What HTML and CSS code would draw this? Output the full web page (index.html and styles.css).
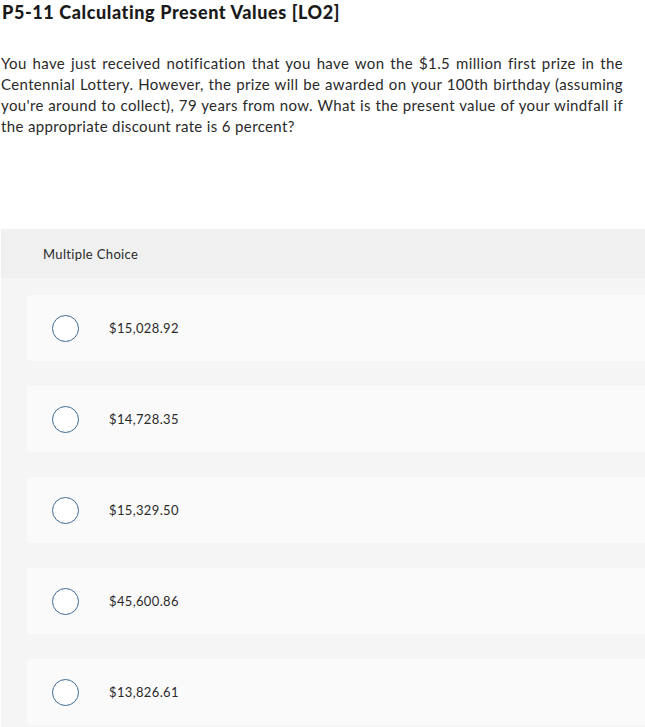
FILE: index.html
```html
<!DOCTYPE html>
<html>
<head>
<meta charset="utf-8">
<link rel="stylesheet" href="styles.css">
</head>
<body>
<div class="page">
  <h1 class="title">P5-11 Calculating Present Values [LO2]</h1>
  <p class="question">You have just received notification that you have won the $1.5 million first prize in the Centennial Lottery. However, the prize will be awarded on your 100th birthday (assuming you're around to collect), 79 years from now. What is the present value of your windfall if the appropriate discount rate is 6 percent?</p>
  <section class="panel">
    <div class="panel-head">Multiple Choice</div>
    <div class="choices">
      <div class="choice"><span class="radio"></span><span class="label">$15,028.92</span></div>
      <div class="choice"><span class="radio"></span><span class="label">$14,728.35</span></div>
      <div class="choice"><span class="radio"></span><span class="label">$15,329.50</span></div>
      <div class="choice"><span class="radio"></span><span class="label">$45,600.86</span></div>
      <div class="choice"><span class="radio"></span><span class="label">$13,826.61</span></div>
    </div>
  </section>
</div>
</body>
</html>
```
FILE: styles.css
```css
html, body {
  margin: 0;
  padding: 0;
  background: #ffffff;
  overflow: hidden;
}
body {
  font-family: Lato, "Open Sans", sans-serif;
  color: #222;
}
.page {
  padding: 0 0 0 1px;
}
.title {
  margin: 0;
  padding: 1px 0 0 1px;
  font-size: 18px;
  font-weight: 900;
  letter-spacing: 0.6px;
  line-height: 22px;
  color: #1a1a1a;
}
.question {
  margin: 30px 0 0 0;
  padding: 0 22px 0 0;
  font-size: 15px;
  letter-spacing: 0.36px;
  line-height: 21px;
  text-align: justify;
  color: #2a2a2a;
}
.panel {
  margin-top: 92px;
  background: #f5f5f5;
  padding-bottom: 30px;
}
.panel-head {
  background: #f0f0f0;
  height: 49px;
  padding-left: 42px;
  display: flex;
  align-items: center;
  font-size: 13px;
  letter-spacing: 0.35px;
  color: #2a2a2a;
}
.choices {
  display: flex;
  flex-direction: column;
  gap: 25px;
  padding: 17px 0 0 26px;
}
.choice {
  height: 66px;
  background: #fafafa;
  border-radius: 3px 0 0 3px;
  display: flex;
  align-items: center;
  padding-left: 25px;
}
.radio {
  width: 25px;
  height: 25px;
  border: 1.5px solid #3d6a94;
  border-radius: 50%;
  background: #fff;
  flex: none;
}
.label {
  margin-left: 30px;
  font-size: 13px;
  letter-spacing: 0.35px;
  color: #2a2a2a;
}
```
